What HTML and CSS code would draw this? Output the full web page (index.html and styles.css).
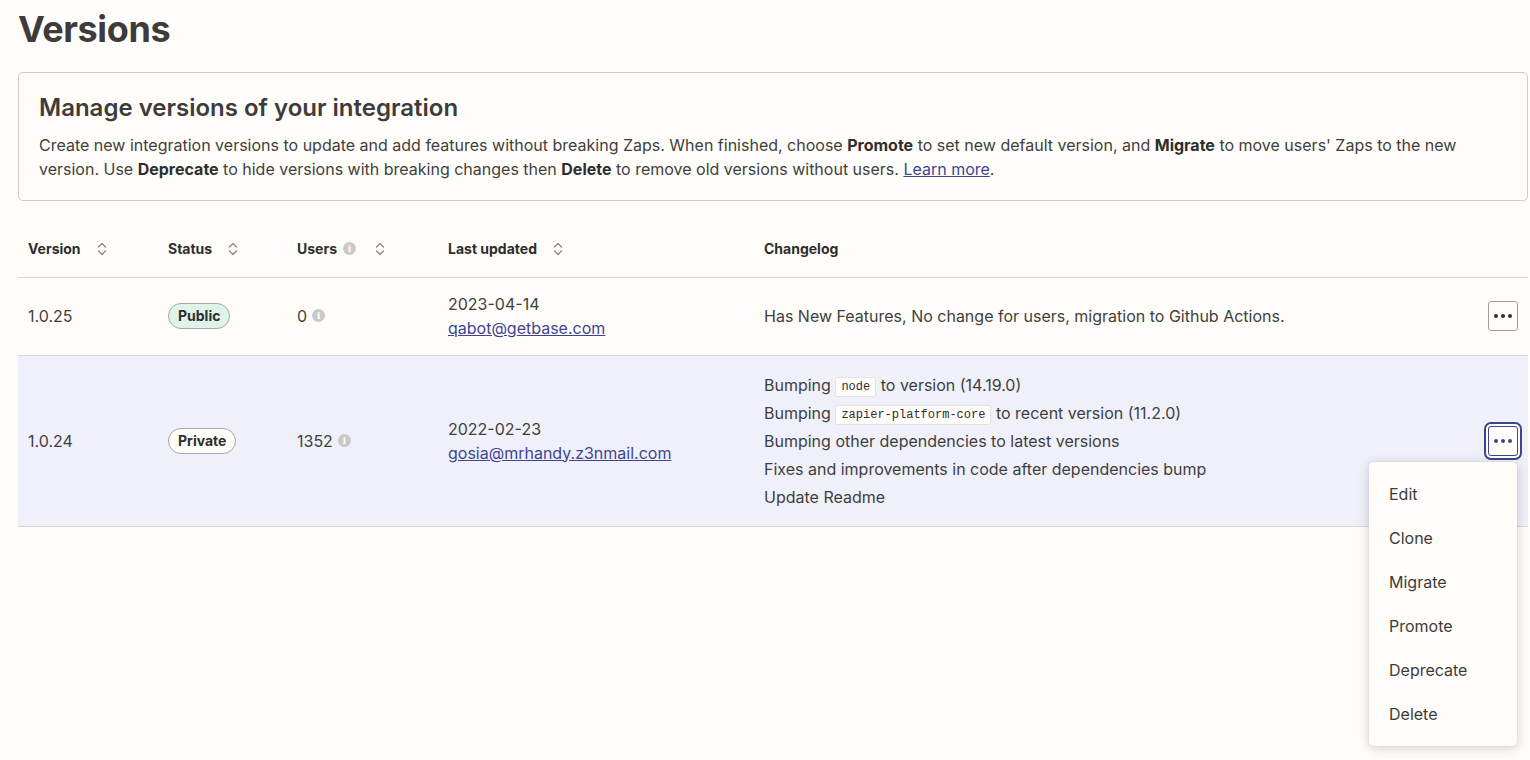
FILE: index.html
```html
<!DOCTYPE html>
<html lang="en">
<head>
<meta charset="utf-8">
<title>Versions</title>
<link rel="stylesheet" href="styles.css">
</head>
<body>
<main class="page">
  <h1 class="title">Versions</h1>
  <section class="card">
    <h2 class="card-title">Manage versions of your integration</h2>
    <p class="card-text">Create new integration versions to update and add features without breaking Zaps. When finished, choose <b>Promote</b> to set new default version, and <b>Migrate</b> to move users' Zaps to the new version. Use <b>Deprecate</b> to hide versions with breaking changes then <b>Delete</b> to remove old versions without users. <a href="#" class="link">Learn more</a>.</p>
  </section>

  <table class="versions">
    <colgroup>
      <col class="c-version"><col class="c-status"><col class="c-users"><col class="c-updated"><col class="c-log"><col class="c-action">
    </colgroup>
    <thead>
      <tr>
        <th><span class="th">Version <svg class="sort" viewBox="0 0 10 16" width="10" height="16"><path d="M1.5 6 5 2.5 8.5 6M1.5 10 5 13.5 8.5 10"/></svg></span></th>
        <th><span class="th">Status <svg class="sort" viewBox="0 0 10 16" width="10" height="16"><path d="M1.5 6 5 2.5 8.5 6M1.5 10 5 13.5 8.5 10"/></svg></span></th>
        <th><span class="th">Users <span class="info">i</span> <svg class="sort sort-wide" viewBox="0 0 10 16" width="10" height="16"><path d="M1.5 6 5 2.5 8.5 6M1.5 10 5 13.5 8.5 10"/></svg></span></th>
        <th><span class="th">Last updated <svg class="sort" viewBox="0 0 10 16" width="10" height="16"><path d="M1.5 6 5 2.5 8.5 6M1.5 10 5 13.5 8.5 10"/></svg></span></th>
        <th><span class="th">Changelog</span></th>
        <th></th>
      </tr>
    </thead>
    <tbody>
      <tr class="row row-first">
        <td>1.0.25</td>
        <td><span class="badge badge-public">Public</span></td>
        <td><span class="users">0 <span class="info">i</span></span></td>
        <td><div>2023-04-14</div><a href="#" class="link">qabot@getbase.com</a></td>
        <td>Has New Features, No change for users, migration to Github Actions.</td>
        <td class="action"><button class="more" aria-label="More"><span class="dot"></span><span class="dot"></span><span class="dot"></span></button></td>
      </tr>
      <tr class="row row-active">
        <td>1.0.24</td>
        <td><span class="badge badge-private">Private</span></td>
        <td><span class="users">1352 <span class="info">i</span></span></td>
        <td><div>2022-02-23</div><a href="#" class="link">gosia@mrhandy.z3nmail.com</a></td>
        <td class="log">
          <div>Bumping <code>node</code> to version (14.19.0)</div>
          <div>Bumping <code>zapier-platform-core</code> to recent version (11.2.0)</div>
          <div>Bumping other dependencies to latest versions</div>
          <div>Fixes and improvements in code after dependencies bump</div>
          <div>Update Readme</div>
        </td>
        <td class="action">
          <div class="anchor">
            <button class="more more-focus" aria-label="More"><span class="dot"></span><span class="dot"></span><span class="dot"></span></button>
            <ul class="menu">
              <li>Edit</li>
              <li>Clone</li>
              <li>Migrate</li>
              <li>Promote</li>
              <li>Deprecate</li>
              <li>Delete</li>
            </ul>
          </div>
        </td>
      </tr>
    </tbody>
  </table>
</main>
</body>
</html>
```

FILE: styles.css
```css
* { box-sizing: border-box; }
html, body { margin: 0; padding: 0; }
body {
  background: #fffdf9;
  color: #403f3e;
  font-family: Inter, "Noto Sans", Arial, sans-serif;
  font-size: 16px;
  line-height: 24px;
}
.page {
  padding: 0 2px 0 18px;
  min-height: 760px;
}
.title {
  font-size: 36px;
  line-height: 48px;
  font-weight: 700;
  letter-spacing: -0.4px;
  margin: 5px 0 19px;
  color: #3d3c3b;
}
.card {
  border: 1px solid #cfcdca;
  border-radius: 5px;
  padding: 19px 20px 19px 20px;
}
.card-title {
  margin: 0 0 9px;
  font-size: 24px;
  line-height: 32px;
  font-weight: 600;
  color: #3d3c3b;
}
.card-text {
  margin: 0;
  font-size: 16px;
  line-height: 24px;
}
.card-text b { font-weight: 700; color: #2d2e2e; }
.link { color: #3d4592; text-decoration: underline; }

.versions {
  margin-top: 20px;
  width: 100%;
  border-collapse: collapse;
  table-layout: fixed;
}
.c-version { width: 140px; }
.c-status { width: 129px; }
.c-users { width: 151px; }
.c-updated { width: 316px; }
.c-action { width: 60px; }
.versions th {
  height: 56px;
  text-align: left;
  padding: 0 10px;
  font-size: 14px;
  font-weight: 700;
  color: #2d2e2e;
  border-bottom: 1px solid #d6d5d3;
  vertical-align: middle;
}
.th { display: inline-flex; align-items: center; }
.sort {
  fill: none;
  stroke: #8c8b8a;
  stroke-width: 1.4;
  stroke-linecap: round;
  stroke-linejoin: round;
  margin-left: 16px;
}
.sort-wide { margin-left: 19px; }
.th .info { margin-left: 6px; }
.info {
  display: inline-flex;
  align-items: center;
  justify-content: center;
  width: 13px;
  height: 13px;
  border-radius: 50%;
  background: #cac9c7;
  color: #fffdf9;
  font-size: 10px;
  font-weight: 700;
  line-height: 1;
  font-family: "DejaVu Serif", serif;
}
.versions td {
  padding: 14px 10px;
  border-bottom: 1px solid #d6d5d3;
  vertical-align: middle;
  font-size: 16px;
  line-height: 24px;
}
.row-first td { height: 77px; padding-bottom: 15px; }
.row-active td { background: #eff0fa; height: 171px; }
.log div { line-height: 28px; height: 28px; }
code {
  font-family: "Liberation Mono", "DejaVu Sans Mono", monospace;
  font-size: 12px;
  line-height: 16px;
  background: #fffdf9;
  border: 1px solid #e3e2e0;
  border-radius: 2px;
  padding: 2px 5px;
  color: #2d2e2e;
  vertical-align: 1px;
}
.users { display: inline-flex; align-items: center; gap: 5px; }
.badge {
  display: inline-block;
  font-size: 14px;
  font-weight: 700;
  line-height: 24px;
  padding: 0 9px;
  border: 1px solid #a8a7a5;
  border-radius: 14px;
  color: #2d2e2e;
}
.badge-public { background: #dff3ea; }
.badge-private { background: #fffdf9; }

.action { text-align: right; }
.anchor { position: relative; display: inline-block; vertical-align: middle; }
.more {
  width: 30px;
  height: 30px;
  border: 1px solid #9f9e9c;
  border-radius: 3px;
  background: #fffdf9;
  display: inline-flex;
  align-items: center;
  justify-content: center;
  gap: 3px;
  padding: 0;
  vertical-align: middle;
}
.anchor .more { display: flex; }
.dot { width: 4px; height: 4px; border-radius: 50%; background: #2d2e2e; }
.more-focus {
  border-color: #3d4592;
  box-shadow: 0 0 0 2px #fffdf9, 0 0 0 4px #3d4592;
}
.more-focus .dot { background: #3d4592; }
.menu {
  position: absolute;
  top: 36px;
  right: 1px;
  width: 148px;
  margin: 0;
  padding: 10px 0;
  list-style: none;
  background: #fffdf9;
  border-radius: 4px;
  box-shadow: 0 2px 12px rgba(0,0,0,0.18), 0 0 1px rgba(0,0,0,0.25);
  text-align: left;
  z-index: 5;
}
.menu li {
  height: 44px;
  line-height: 44px;
  padding: 0 20px;
  font-size: 16px;
  font-weight: 400;
  color: #3d3c3b;
}
```
